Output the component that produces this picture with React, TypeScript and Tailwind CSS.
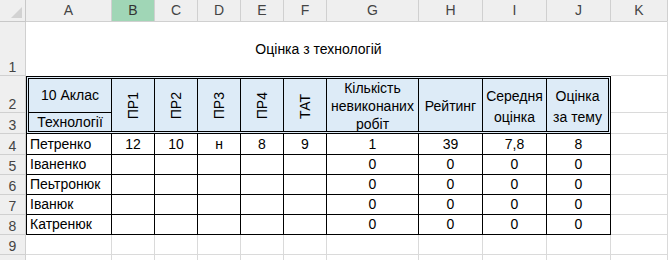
import React from "react";

const cols = "grid grid-cols-[26px_86px_43px_43px_43px_43px_43px_92px_64px_64px_64px_1fr]";
const letters = ["A", "B", "C", "D", "E", "F", "G", "H", "I", "J", "K"];

const students = [
    { name: "Петренко", marks: ["12", "10", "н", "8", "9"], rest: ["1", "39", "7,8", "8"] },
    { name: "Іваненко", marks: ["", "", "", "", ""], rest: ["0", "0", "0", "0"] },
    { name: "Пеьтронюк", marks: ["", "", "", "", ""], rest: ["0", "0", "0", "0"] },
    { name: "Іванюк", marks: ["", "", "", "", ""], rest: ["0", "0", "0", "0"] },
    { name: "Катренюк", marks: ["", "", "", "", ""], rest: ["0", "0", "0", "0"] },
];

const RowNum: React.FC<{ n?: number }> = ({ n }) => (
    <div className="flex items-end justify-center pb-[1px] bg-[#efefef] border-r border-b border-[#d0d0d0] text-[#444] text-[14px] leading-none">
        {n}
    </div>
);

const Blank: React.FC = () => <div className="border-r border-b border-[#dadada]" />;

const HeaderBlock: React.FC = () => (
    <div className="col-span-10 row-span-2 border-[3px] border-double border-black bg-[#ddebf7] grid grid-cols-[83px_43px_43px_43px_43px_43px_92px_64px_64px_1fr] grid-rows-[34px_18px] text-black text-[14px]">
        <div className="flex items-center justify-center border-r border-b border-black">10 Аклас</div>
        {["ПР1", "ПР2", "ПР3", "ПР4", "ТАТ"].map((t) => (
            <div key={t} className="row-span-2 flex items-center justify-center border-r border-black pt-[2px]">
                <span className="[writing-mode:vertical-rl] rotate-180 leading-none">{t}</span>
            </div>
        ))}
        <div className="row-span-2 flex flex-col items-center justify-center border-r border-black leading-[18px] pt-[1px] overflow-hidden">
            <span>Кількість</span>
            <span>невиконаних</span>
            <span>робіт</span>
        </div>
        <div className="row-span-2 flex items-center justify-center border-r border-black pt-[3px]">Рейтинг</div>
        <div className="row-span-2 flex flex-col items-center justify-center border-r border-black leading-[21px] pt-[3px]">
            <span>Середня</span>
            <span>оцінка</span>
        </div>
        <div className="row-span-2 flex flex-col items-center justify-center leading-[21px] pt-[3px]">
            <span>Оцінка</span>
            <span>за тему</span>
        </div>
        <div className="flex items-center justify-center border-r border-black">Технології</div>
    </div>
);

export default function App() {
    return (
        <div className="w-[668px] h-[260px] overflow-hidden bg-white font-['Liberation_Sans',Arial,sans-serif]">
            {/* Column letters */}
            <div className={`${cols} h-[21px] bg-[#efefef] text-[14px] text-[#444]`}>
                <div className="relative border-r border-b border-[#c8c8c8]">
                    <div className="absolute right-[3px] bottom-[3px] w-0 h-0 border-l-[11px] border-l-transparent border-b-[11px] border-b-[#d2d2d2]" />
                </div>
                {letters.map((l) => (
                    <div
                        key={l}
                        className={`flex items-center justify-center border-r border-b border-[#d0d0d0] ${l === "B" ? "bg-[#a0d6b6] text-[#333]" : ""}`}
                    >
                        {l}
                    </div>
                ))}
            </div>

            {/* Sheet body */}
            <div className={`${cols} grid-rows-[55px_37px_21px_21px_20px_20px_20px_20px_20px_20px] text-[14px] text-black`}>
                <RowNum n={1} />
                <div className="col-span-10 flex items-center justify-center pt-[1px]">Оцінка з технологій</div>
                <Blank />

                <RowNum n={2} />
                <HeaderBlock />
                <Blank />

                <RowNum n={3} />
                <Blank />

                {students.map((s, i) => (
                    <React.Fragment key={s.name}>
                        <RowNum n={i + 4} />
                        <div className="flex items-center pl-[3px] border-l border-r border-b border-black whitespace-nowrap">{s.name}</div>
                        {s.marks.map((m, j) => (
                            <div key={"m" + j} className="flex items-center justify-center border-r border-b border-black">{m}</div>
                        ))}
                        {s.rest.map((v, j) => (
                            <div key={"r" + j} className="flex items-center justify-center border-r border-b border-black">{v}</div>
                        ))}
                        <Blank />
                    </React.Fragment>
                ))}

                <RowNum n={9} />
                {letters.map((l) => <Blank key={"9" + l} />)}
                <RowNum />
                {letters.map((l) => <Blank key={"10" + l} />)}
            </div>
        </div>
    );
}
